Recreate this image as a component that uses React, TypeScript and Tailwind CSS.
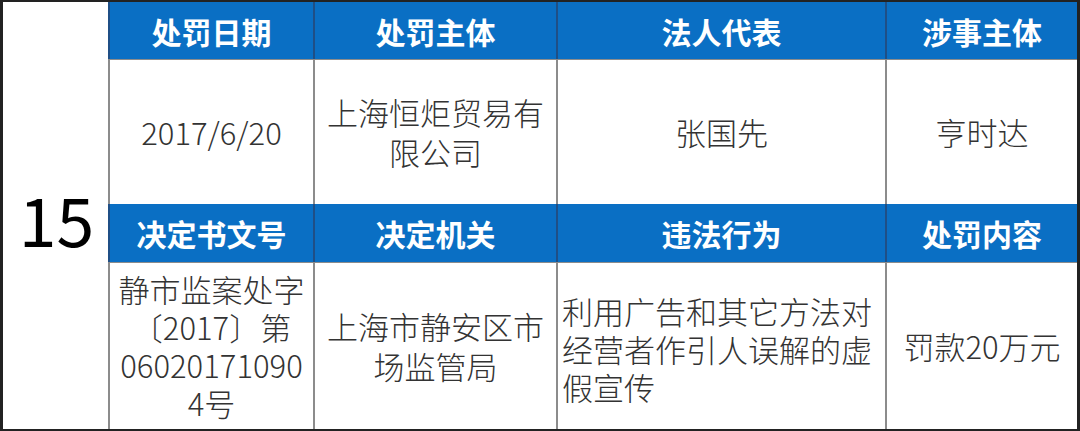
import React from "react";

const font = { fontFamily: '"Noto Sans CJK SC", "Noto Sans", sans-serif' };

function H({ children }: { children: React.ReactNode }) {
  return (
    <div className="flex items-center justify-center bg-[#0a6fc4] border-l-2 border-[#1f4f86] text-white font-bold text-[30px] leading-none">
      {children}
    </div>
  );
}

function D({ children }: { children: React.ReactNode }) {
  return (
    <div className="flex items-center justify-center border-l-2 border-t border-[#8c8c8c] text-[#333] font-light text-[31px] leading-[40px] text-center px-1">
      {children}
    </div>
  );
}

export default function App() {
  return (
    <div
      style={font}
      className="w-[1080px] h-[431px] bg-white border-l-[3px] border-r-[3px] border-t-2 border-b-2 border-[#222]"
    >
      <div className="grid h-full grid-cols-[105px_205px_243px_329px_192px] grid-rows-[57px_145px_58px_167px]">
        <div className="row-span-4 flex items-center justify-center text-black font-normal text-[68px] leading-none pt-[4px] pl-[2px]">
          15
        </div>
        <H>处罚日期</H>
        <H>处罚主体</H>
        <H>法人代表</H>
        <H>涉事主体</H>
        <D>2017/6/20</D>
        <D>
          <span>
            上海恒炬贸易有
            <br />
            限公司
          </span>
        </D>
        <D>张国先</D>
        <D>亨时达</D>
        <H>决定书文号</H>
        <H>决定机关</H>
        <H>违法行为</H>
        <H>处罚内容</H>
        <D>
          <span className="leading-[38px]">
            静市监案处字
            <br />
            〔2017〕第
            <br />
            06020171090
            <br />
            4号
          </span>
        </D>
        <D>
          <span>
            上海市静安区市
            <br />
            场监管局
          </span>
        </D>
        <D>
          <span className="text-left w-full leading-[38px] pt-[6px]">
            利用广告和其它方法对
            <br />
            经营者作引人误解的虚
            <br />
            假宣传
          </span>
        </D>
        <D>罚款20万元</D>
      </div>
    </div>
  );
}
